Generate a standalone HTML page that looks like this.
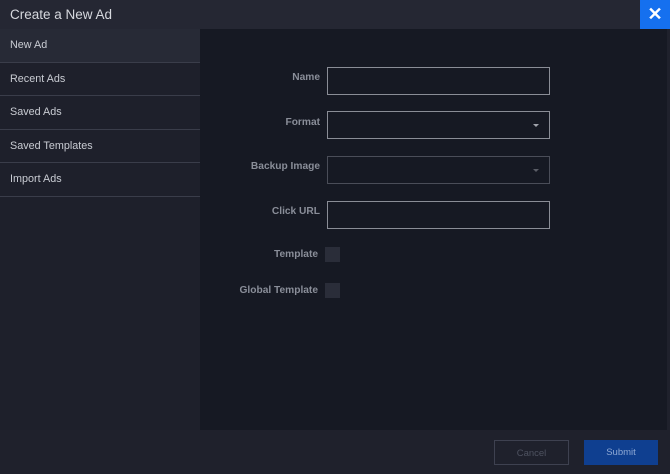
<!DOCTYPE html>
<html><head><style>
*{box-sizing:border-box;margin:0;padding:0}
body{width:670px;height:474px;background:#1f212c;font-family:"Liberation Sans",sans-serif;position:relative;overflow:hidden}
.hdr{position:absolute;left:0;top:0;width:670px;height:29px;background:#252733}
.hdr .t{position:absolute;left:10px;top:7px;color:#d6d8de;font-size:13.5px}
.x{position:absolute;right:0;top:0;width:30px;height:29px;background:#1570ef;color:#fff;font-size:18px;font-weight:bold;text-align:center;line-height:29px}
.side{position:absolute;left:0;top:29px;width:200px;height:401px;background:#1e202b}
.it{height:33.5px;border-bottom:1.5px solid #3a3d4a;color:#c9ccd3;font-size:10.8px;padding-left:10px;line-height:33px}
.it.sel{background:#272a36}
.main{position:absolute;left:200px;top:29px;width:467px;height:401px;background:#161923}
.lbl{position:absolute;right:350px;color:#8a8e99;font-size:10.2px;font-weight:bold;text-align:right}
.in{position:absolute;left:327px;width:223px;height:28px;border:1.5px solid #8a8d96;background:#161923}
.in.dis{border-color:#4a4d58}
.car{position:absolute;right:10px;top:12px;width:0;height:0;border-left:3.5px solid transparent;border-right:3.5px solid transparent;border-top:3.5px solid #a0a3ab}
.dis .car{border-top-color:#5a5d66}
.cb{position:absolute;left:325px;width:15px;height:15px;background:#2a2d39}
.btn{position:absolute;top:440px;height:25px;font-size:9.5px;text-align:center;line-height:25px}
</style></head><body>
<div class="hdr"><div class="t">Create a New Ad</div><div class="x">✕</div></div>
<div class="side">
<div class="it sel">New Ad</div><div class="it">Recent Ads</div><div class="it">Saved Ads</div><div class="it">Saved Templates</div><div class="it">Import Ads</div>
</div>
<div class="main"></div>
<div class="lbl" style="top:72px">Name</div>
<div class="in" style="top:67px"></div>
<div class="lbl" style="top:117px">Format</div>
<div class="in" style="top:111px"><div class="car"></div></div>
<div class="lbl" style="top:161px">Backup Image</div>
<div class="in dis" style="top:156px"><div class="car"></div></div>
<div class="lbl" style="top:206px">Click URL</div>
<div class="in" style="top:201px"></div>
<div class="lbl" style="top:249px;right:352px">Template</div>
<div class="cb" style="top:247px"></div>
<div class="lbl" style="top:285px;right:352px">Global Template</div>
<div class="cb" style="top:283px"></div>
<div class="btn" style="left:494px;width:75px;border:1px solid #3e4150;color:#4e5260">Cancel</div>
<div class="btn" style="left:584px;width:74px;background:#0f3f90;color:#8ea8d4">Submit</div>
</body></html>
